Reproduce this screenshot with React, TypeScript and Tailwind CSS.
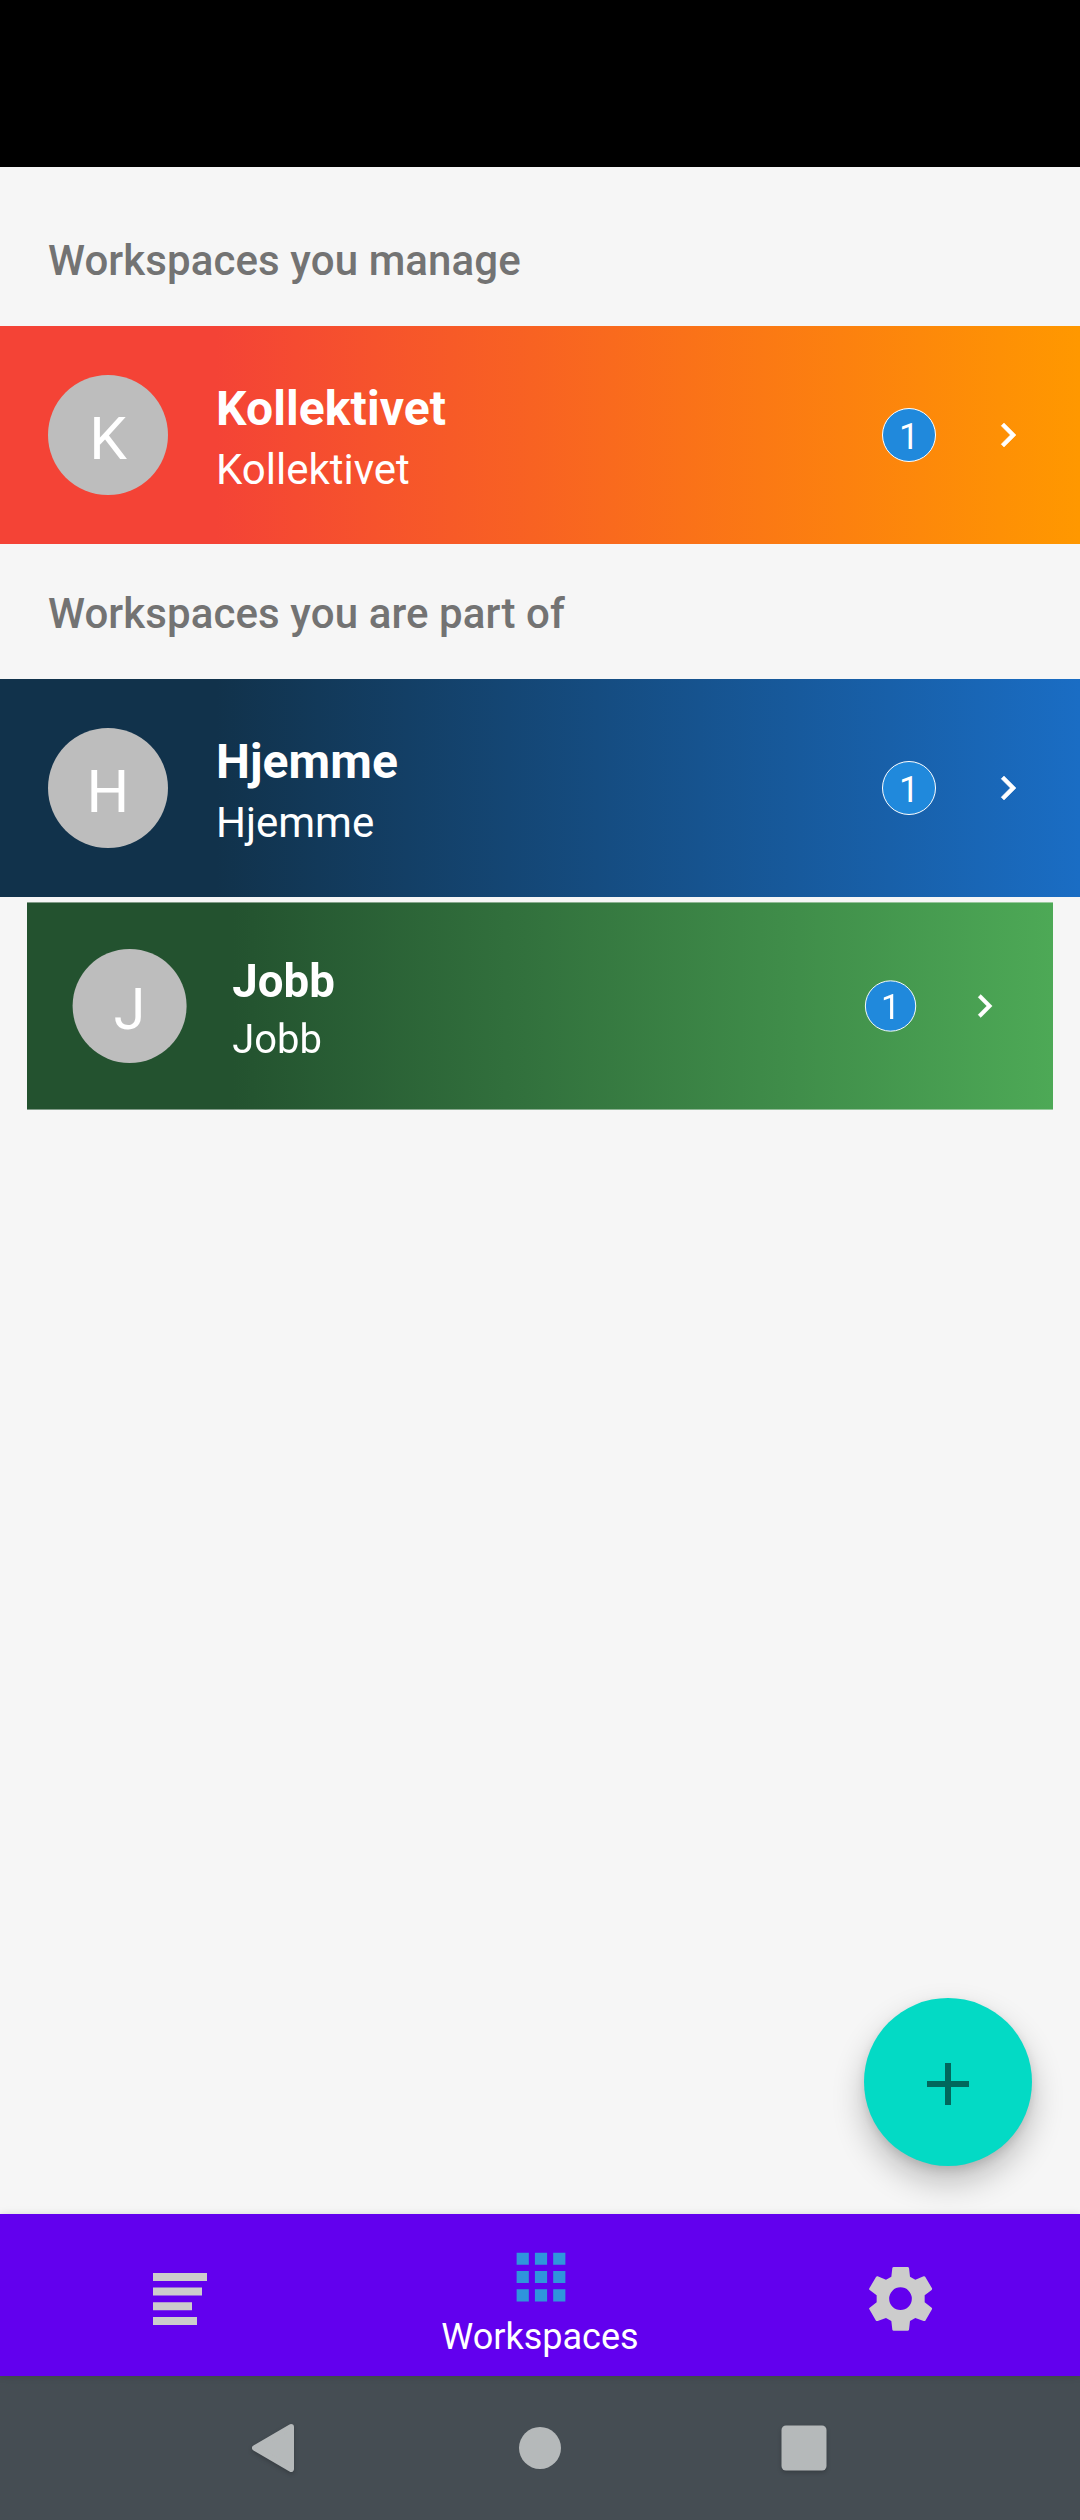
import { IoMdApps } from "react-icons/io";

type RowProps = { name: string; gradient: string; pressed?: boolean };

function Row({ name, gradient, pressed }: RowProps) {
  return (
    <div className={`flex h-[218px] w-full items-center px-12 ${gradient} ${pressed ? "scale-95" : ""}`}>
      <div className="flex h-[120px] w-[120px] items-center justify-center rounded-full bg-[#bdbdbd] pt-[7px] text-[60px] leading-none text-white">
        {name[0]}
      </div>
      <div className="ml-12 flex-1 pt-[9px] text-white">
        <div className="text-[48px] leading-[60px] font-bold tracking-[0.1px]">{name}</div>
        <div className="text-[42px] leading-[62px]">{name}</div>
      </div>
      <div className="flex h-[54px] w-[54px] items-center justify-center rounded-full border border-white bg-[#2089dc] pt-[4px] text-[36px] leading-none text-white">
        1
      </div>
      <svg viewBox="0 0 24 24" className="-mt-px ml-12 h-12 w-12 fill-white stroke-white stroke-[0.25]">
        <path d="M10 6L8.59 7.41 13.17 12l-4.58 4.59L10 18l6-6z" />
      </svg>
    </div>
  );
}

function Header({ children }: { children: string }) {
  return (
    <div className="h-[135px] px-12 pt-[45px] text-[42px] leading-[50px] font-medium tracking-[0.1px] text-[#737373]">
      {children}
    </div>
  );
}

function Gear() {
  return (
    <svg viewBox="0 0 240 240" className="h-20 w-20 fill-[#cccccc]">
      <path
        fillRule="evenodd"
        d="M101 21H143Q146 21 147 24L150 50Q158 54 166 59L191 49Q194 48 196 51L216 85Q217 88 215 90L194 106V127L215 143Q217 145 216 148L196 182Q194 184 191 183L166 174Q158 179 150 183L147 209Q146 212 143 212H101Q98 212 97 209L94 183Q86 179 78 174L53 183Q50 184 48 182L28 148Q26 145 29 143L50 127V106L29 90Q26 88 28 85L48 51Q50 48 53 49L78 59Q86 54 94 50L97 24Q98 21 101 21ZM121.5 82a34 34 0 1 0 0 68a34 34 0 1 0 0-68Z"
      />
    </svg>
  );
}

export default function App() {
  return (
    <div className="flex h-[2520px] w-[1080px] flex-col overflow-hidden bg-[#f6f6f6] font-[Roboto,sans-serif]">
      <div className="h-[167px] shrink-0 bg-black" />
      <main className="relative flex-1 pt-6">
        <Header>Workspaces you manage</Header>
        <Row name="Kollektivet" gradient="bg-[linear-gradient(to_right,#f44336_20%,#ff9800)]" />
        <Header>Workspaces you are part of</Header>
        <Row name="Hjemme" gradient="bg-[linear-gradient(to_right,#11324b_20%,#1a6dc4)]" />
        <Row name="Jobb" pressed gradient="bg-[linear-gradient(to_right,#23522f_20%,#4da956)]" />
        <button className="absolute right-12 bottom-12 flex h-[168px] w-[168px] items-center justify-center rounded-full bg-[#03dac5] pt-1 shadow-[0_16px_32px_rgba(0,0,0,0.24),0_4px_10px_rgba(0,0,0,0.1)]">
          <svg viewBox="0 0 42 42" className="h-[42px] w-[42px] fill-[#01675c]">
            <path d="M18 0h6v18h18v6H24v18h-6V24H0v-6h18z" />
          </svg>
        </button>
      </main>
      <nav className="relative grid h-[162px] shrink-0 grid-cols-3 bg-[#6200ee] shadow-[0_0_8px_rgba(0,0,0,0.12)]">
        <div className="flex justify-center pt-[59px]">
          <svg viewBox="0 0 54 52" className="h-[52px] w-[54px] fill-[#cccccc]">
            <path d="M0 0h54v8H0zM0 14.6h49v8H0zM0 29.3h39v8H0zM0 44h44v8H0z" />
          </svg>
        </div>
        <div className="flex flex-col items-center pt-[24px]">
          <IoMdApps className="ml-px h-[78px] w-[78px] text-[#2f95dc]" />
          <span className="text-[36px] leading-[42px] text-white">Workspaces</span>
        </div>
        <div className="flex justify-center pt-[46px]">
          <Gear />
        </div>
      </nav>
      <footer className="h-36 shrink-0 bg-[#454d53]">
        <svg viewBox="0 0 1080 144" className="h-36 w-full fill-[#b5b9ba]">
          <g className="drop-shadow-[0_2px_2px_rgba(0,0,0,0.2)]">
            <path d="M291 51 255 72 291 93z" stroke="#b5b9ba" strokeWidth="6" strokeLinejoin="round" />
            <rect x="781.5" y="49.5" width="45" height="45" rx="4.5" />
          </g>
          <circle cx="540" cy="72" r="21" />
        </svg>
      </footer>
    </div>
  );
}
